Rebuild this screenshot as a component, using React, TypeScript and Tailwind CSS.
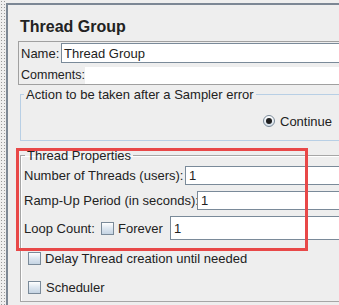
import React from 'react';

function Field({ value, className }: { value?: string; className?: string }) {
  return (
    <div
      className={`flex-1 min-w-0 bg-white border border-[#7a8a99] flex items-center pl-[2px] ${className ?? ''}`}
    >
      {value}
    </div>
  );
}

function CheckBox() {
  return (
    <span className="w-[13px] h-[13px] shrink-0 border border-[#7a8a99] bg-[linear-gradient(to_bottom,#ffffff,#dfe8f1_45%,#c5d4e3)]" />
  );
}

function Radio() {
  return (
    <span className="w-[12px] h-[12px] shrink-0 rounded-full border border-[#7a8a99] bg-[linear-gradient(to_bottom,#ffffff,#d4dfea)] flex items-center justify-center">
      <span className="w-[6px] h-[6px] rounded-full bg-[#1f1f1f]" />
    </span>
  );
}

export default function App() {
  return (
    <div className="relative w-[339px] h-[305px] overflow-hidden bg-[#eeeeee] flex font-['Liberation_Sans',Arial,sans-serif] text-[13px] leading-[15px] text-[#222]">
      {/* splitter */}
      <div className="w-[6px] shrink-0 bg-[radial-gradient(circle,#9a9a9a_0.7px,transparent_0.9px)] bg-[length:3px_3px]" />

      <div className="flex-1 min-w-0 mt-[3px] border-t-2 border-l-2 border-[#7c8794] pl-[10px]">
        <h1 className="mt-[12px] ml-[2px] text-[16px] leading-[19px] font-bold">Thread Group</h1>

        {/* name / comments */}
        <div className="mt-[5px] w-[340px] h-[44px] border border-[#a0a0a0] flex flex-col">
          <div className="mt-[1px] h-[20px] flex">
            <span className="w-[42px] shrink-0 pl-[2px] flex items-center">Name:</span>
            <Field value="Thread Group" className="pl-[2px]" />
          </div>
          <div className="mt-[4px] h-[17px] flex">
            <span className="w-[66px] shrink-0 pl-[2px] text-[12.5px] leading-[17px] whitespace-nowrap">Comments:</span>
            <div className="flex-1 bg-white" />
          </div>
        </div>

        {/* sampler error action */}
        <fieldset className="mt-[2px] ml-[2px] w-[340px] border border-[#b8cfe5]">
          <legend className="ml-[3px] px-[2px] leading-[15px]">Action to be taken after a Sampler error</legend>
          <div className="mt-[11px] mb-[11px] h-[16px] flex items-center pl-[242px] gap-[5px]">
            <Radio />
            <span className="whitespace-nowrap">Continue</span>
          </div>
        </fieldset>

        {/* thread properties */}
        <fieldset className="mt-[7px] ml-[2px] w-[340px] border border-[#a6a6a6] shadow-[inset_1px_1px_0_#ffffff]">
          <legend className="ml-[4px] px-[2px] leading-[15px]">Thread Properties</legend>
          <div className="flex flex-col pl-[3px]">
            <div className="mt-[3px] h-[19px] flex items-center">
              <span className="w-[161px] shrink-0 whitespace-nowrap">Number of Threads (users):</span>
              <Field value="1" className="self-stretch pl-[3px]" />
            </div>
            <div className="mt-[6px] h-[19px] flex items-center">
              <span className="w-[173px] shrink-0 whitespace-nowrap">Ramp-Up Period (in seconds):</span>
              <Field value="1" className="self-stretch pl-[3px]" />
            </div>
            <div className="mt-[6px] h-[24px] flex items-center">
              <span className="w-[77px] shrink-0 whitespace-nowrap">Loop Count:</span>
              <CheckBox />
              <span className="w-[56px] shrink-0 pl-[4px]">Forever</span>
              <Field value="1" className="self-stretch pl-[3px]" />
            </div>
          </div>
          <div className="mt-[12px] ml-[7px] h-[13px] flex items-center gap-[4px]">
            <CheckBox />
            <span className="whitespace-nowrap">Delay Thread creation until needed</span>
          </div>
          <div className="mt-[16px] mb-[7px] ml-[7px] h-[13px] flex items-center gap-[5px]">
            <CheckBox />
            <span className="whitespace-nowrap">Scheduler</span>
          </div>
        </fieldset>
      </div>

      {/* highlight annotation */}
      <div className="absolute left-[16px] top-[148px] w-[292px] h-[103px] border-[3px] border-[#e84848] pointer-events-none" />
    </div>
  );
}
